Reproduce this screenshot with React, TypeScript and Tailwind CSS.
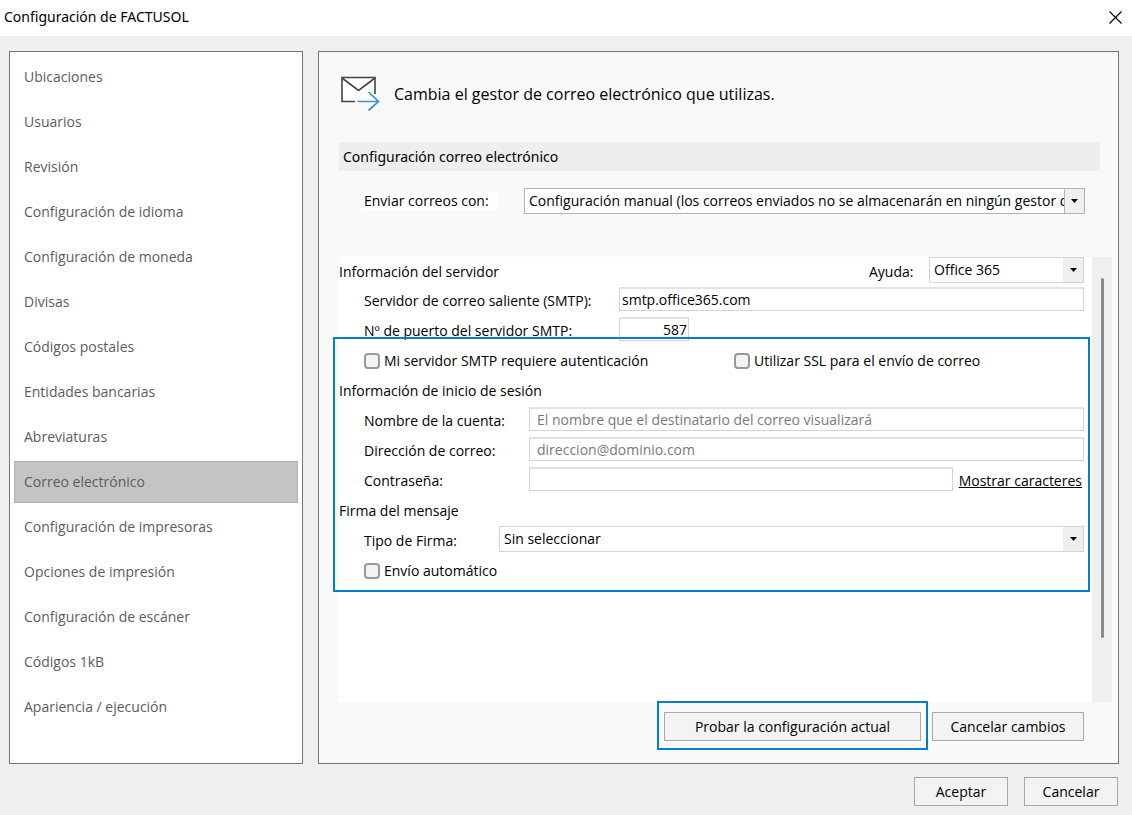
import { useId, useState } from "react";
import type { ReactNode } from "react";
import clsx from "clsx";

const sections = [
  "Ubicaciones",
  "Usuarios",
  "Revisión",
  "Configuración de idioma",
  "Configuración de moneda",
  "Divisas",
  "Códigos postales",
  "Entidades bancarias",
  "Abreviaturas",
  "Correo electrónico",
  "Configuración de impresoras",
  "Opciones de impresión",
  "Configuración de escáner",
  "Códigos 1kB",
  "Apariencia / ejecución",
];

const inputStyles =
  "mt-px h-6 min-w-0 self-start border border-[#d4d4d4] border-t-2 border-t-[#e3e3e3] bg-white outline-none placeholder:text-[#7a7a7a] placeholder:opacity-100";

function MailIcon() {
  return (
    <svg width="40" height="36" viewBox="0 0 40 36" fill="none" className="shrink-0">
      <path d="M13.5 25.5H1V1.5H34V18" fill="#fff" />
      <path d="M14 25.5H1V1.5H34V18" stroke="#444" strokeWidth="1.6" />
      <path d="M1 2L17.5 14.5L34 2" stroke="#444" strokeWidth="1.6" />
      <path d="M16.5 25.5H37.5M27.5 16L37.5 25.5L27.5 34.5" stroke="#3f93c6" strokeWidth="1.7" />
    </svg>
  );
}

function Button({ children, className }: { children: ReactNode; className?: string }) {
  return (
    <button
      type="button"
      className={clsx("h-[29px] border border-[#a8a8a8] bg-[#f3f3f3] text-center text-black", className)}
    >
      {children}
    </button>
  );
}

interface SelectProps {
  id: string;
  value: string;
  strong?: boolean;
  className?: string;
}

function Select({ id, value, strong, className }: SelectProps) {
  return (
    <div className={clsx("relative h-[26px] min-w-0", className)}>
      <select
        id={id}
        className={clsx(
          "block h-full w-full appearance-none border bg-white pr-5 pl-1 outline-none",
          strong ? "border-[#b4b4b4]" : "border-[#d4d4d4]"
        )}
      >
        <option>{value}</option>
      </select>
      <span
        className={clsx(
          "pointer-events-none absolute inset-y-px right-px flex w-5 items-center justify-center bg-[#efefef]",
          strong && "border-l border-[#b4b4b4]"
        )}
      >
        <svg width="7" height="4" viewBox="0 0 7 4">
          <path d="M0 0H7L3.5 4Z" fill="#000" />
        </svg>
      </span>
    </div>
  );
}

function Checkbox({ label, className }: { label: string; className?: string }) {
  const id = useId();
  return (
    <div className={clsx("flex items-center gap-1", className)}>
      <input
        id={id}
        type="checkbox"
        className="size-4 appearance-none rounded border-2 border-[#999] bg-[#f3f3f3] checked:bg-[#0080c8]"
      />
      <label htmlFor={id}>{label}</label>
    </div>
  );
}

function Row({ children }: { children: ReactNode }) {
  return <div className="flex h-[30px] items-center pl-[25px]">{children}</div>;
}

export default function App() {
  const [active, setActive] = useState("Correo electrónico");
  const [showPassword, setShowPassword] = useState(false);

  return (
    <div className="flex min-h-screen flex-col bg-[#efefef] font-['Open_Sans','Noto_Sans',sans-serif] text-sm leading-[18px] text-black">
      {/* Title bar */}
      <header className="flex h-9 items-center justify-between bg-white pr-2.5 pb-0.5 pl-1">
        <h1 className="font-['Noto_Sans',sans-serif]">Configuración de FACTUSOL</h1>
        <button type="button" aria-label="Cerrar">
          <svg width="13" height="13" viewBox="0 0 13 13" className="block">
            <path d="M0.5 0.5L12.5 12.5M12.5 0.5L0.5 12.5" stroke="#000" strokeWidth="1.2" />
          </svg>
        </button>
      </header>

      <div className="flex flex-1 gap-[15px] pt-[15px] pr-[13px] pl-[9px]">
        {/* Sections */}
        <nav className="flex w-[294px] shrink-0 flex-col gap-[3px] border border-[#757575] bg-white p-1">
          {sections.map((name) => (
            <button
              key={name}
              type="button"
              onClick={() => setActive(name)}
              className={clsx(
                "h-[42px] border px-[9px] text-left text-[#5c5c5c]",
                name === active ? "border-[#adadad] bg-[#c4c4c4]" : "border-transparent"
              )}
            >
              {name}
            </button>
          ))}
        </nav>

        {/* Settings */}
        <main className="flex min-w-0 flex-1 flex-col border border-[#757575] bg-[#f9f9f9] pl-5">
          <div className="flex items-center gap-[13px] pt-6 pl-0.5">
            <MailIcon />
            <p className="text-base leading-[18px]">Cambia el gestor de correo electrónico que utilizas.</p>
          </div>

          <h2 className="mt-[30px] mr-[18px] bg-[#eee] px-1 py-[5px] font-['Noto_Sans',sans-serif] leading-[19px]">
            Configuración correo electrónico
          </h2>

          <div className="mt-[17px] flex items-center pr-[33px] pl-[25px]">
            <label htmlFor="gestor" className="w-[134px] shrink-0 bg-white">
              Enviar correos con:
            </label>
            <Select
              id="gestor"
              value="Configuración manual (los correos enviados no se almacenarán en ningún gestor de correo)"
              strong
              className="ml-[26px] flex-1"
            />
          </div>

          <div className="mt-[43px] mr-1.5 flex flex-1 bg-white">
            <form className="min-w-0 flex-1 pr-2">
              <div className="flex h-[29px] items-center">
                <h3 className="flex-1">Información del servidor</h3>
                <label htmlFor="ayuda" className="w-[60px]">
                  Ayuda:
                </label>
                <Select id="ayuda" value="Office 365" className="w-[155px] self-start" />
              </div>
              <Row>
                <label htmlFor="smtp" className="w-[255px] shrink-0">
                  Servidor de correo saliente (SMTP):
                </label>
                <input id="smtp" defaultValue="smtp.office365.com" className={clsx(inputStyles, "flex-1 px-0.5")} />
              </Row>
              <Row>
                <label htmlFor="puerto" className="w-[255px] shrink-0">
                  Nº de puerto del servidor SMTP:
                </label>
                <input id="puerto" defaultValue="587" className={clsx(inputStyles, "w-[70px] px-px text-right")} />
              </Row>

              <div className="relative">
                <Row>
                  <Checkbox label="Mi servidor SMTP requiere autenticación" className="w-[370px]" />
                  <Checkbox label="Utilizar SSL para el envío de correo" />
                </Row>

                <h3 className="py-1.5">Información de inicio de sesión</h3>
                <Row>
                  <label htmlFor="cuenta" className="w-[165px] shrink-0">
                    Nombre de la cuenta:
                  </label>
                  <input
                    id="cuenta"
                    placeholder="El nombre que el destinatario del correo visualizará"
                    className={clsx(inputStyles, "flex-1 px-[7px]")}
                  />
                </Row>
                <Row>
                  <label htmlFor="direccion" className="w-[165px] shrink-0">
                    Dirección de correo:
                  </label>
                  <input
                    id="direccion"
                    placeholder="direccion@dominio.com"
                    className={clsx(inputStyles, "flex-1 px-[7px]")}
                  />
                </Row>
                <Row>
                  <label htmlFor="clave" className="w-[165px] shrink-0">
                    Contraseña:
                  </label>
                  <input
                    id="clave"
                    type={showPassword ? "text" : "password"}
                    className={clsx(inputStyles, "flex-1 px-[7px]")}
                  />
                  <a
                    href="#clave"
                    onClick={() => setShowPassword(!showPassword)}
                    className="mr-0.5 ml-1.5 underline"
                  >
                    Mostrar caracteres
                  </a>
                </Row>

                <h3 className="py-1.5">Firma del mensaje</h3>
                <Row>
                  <label htmlFor="firma" className="w-[135px] shrink-0">
                    Tipo de Firma:
                  </label>
                  <Select id="firma" value="Sin seleccionar" className="flex-1 self-start" />
                </Row>
                <Row>
                  <Checkbox label="Envío automático" />
                </Row>

                {/* Highlighted block */}
                <div className="pointer-events-none absolute -top-[9px] -right-1.5 -bottom-1.5 -left-1.5 border-2 border-[#0080c8]" />
              </div>
            </form>

            {/* Scrollbar */}
            <div className="flex w-5 justify-center bg-[#efefef] pt-[21px]">
              <div className="h-[360px] w-[3px] rounded-full bg-[#8a8a8a]" />
            </div>
          </div>

          <div className="flex justify-end gap-[11px] pt-2.5 pr-[34px] pb-[22px]">
            <div className="relative">
              <Button className="w-[257px]">Probar la configuración actual</Button>
              <div className="pointer-events-none absolute -inset-x-[7px] -top-[11px] -bottom-[9px] border-2 border-[#0080c8]" />
            </div>
            <Button className="w-[152px]">Cancelar cambios</Button>
          </div>
        </main>
      </div>

      <footer className="flex justify-end gap-4 pt-[13px] pr-3.5 pb-[9px]">
        <Button className="w-[94px]">Aceptar</Button>
        <Button className="w-[94px]">Cancelar</Button>
      </footer>
    </div>
  );
}
